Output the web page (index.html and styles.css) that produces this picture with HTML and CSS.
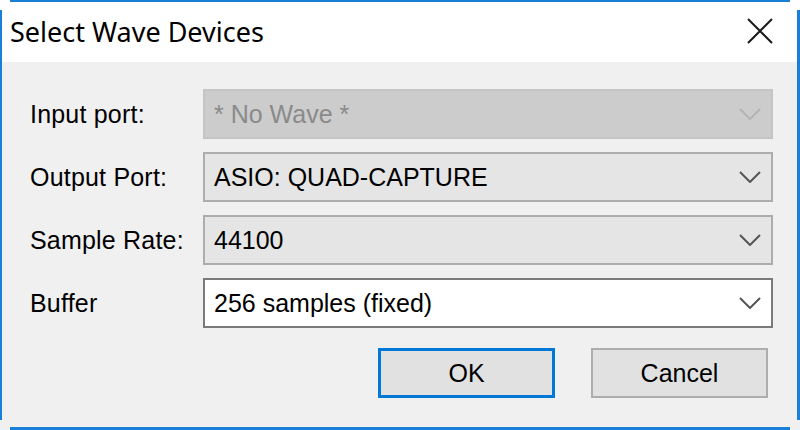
FILE: index.html
```html
<!DOCTYPE html>
<html>
<head>
<meta charset="utf-8">
<link rel="stylesheet" href="styles.css">
</head>
<body>
<div class="window">
  <div class="titlebar">
    <span class="title">Select Wave Devices</span>
    <span class="close">
      <svg width="26" height="26" viewBox="0 0 26 26"><path d="M1 1 L25 25 M25 1 L1 25" stroke="#1a1a1a" stroke-width="2" fill="none"/></svg>
    </span>
  </div>
  <div class="body">
    <div class="form">
      <div class="label">Input port:</div>
      <div class="combo disabled"><span class="value">* No Wave *</span><svg class="chev" width="22" height="12" viewBox="0 0 22 12"><path d="M1 1 L11 11 L21 1" stroke="#b4b4b4" stroke-width="2" fill="none"/></svg></div>
      <div class="label">Output Port:</div>
      <div class="combo"><span class="value">ASIO: QUAD-CAPTURE</span><svg class="chev" width="22" height="12" viewBox="0 0 22 12"><path d="M1 1 L11 11 L21 1" stroke="#555" stroke-width="2" fill="none"/></svg></div>
      <div class="label">Sample Rate:</div>
      <div class="combo"><span class="value">44100</span><svg class="chev" width="22" height="12" viewBox="0 0 22 12"><path d="M1 1 L11 11 L21 1" stroke="#555" stroke-width="2" fill="none"/></svg></div>
      <div class="label">Buffer</div>
      <div class="combo white"><span class="value">256 samples (fixed)</span><svg class="chev" width="22" height="12" viewBox="0 0 22 12"><path d="M1 1 L11 11 L21 1" stroke="#555" stroke-width="2" fill="none"/></svg></div>
    </div>
    <div class="buttons">
      <div class="btn default">OK</div>
      <div class="btn">Cancel</div>
    </div>
  </div>
</div>
</body>
</html>
```
FILE: styles.css
```css
html, body {
  margin: 0;
  padding: 0;
  width: 800px;
  height: 430px;
  overflow: hidden;
  background: #ffffff;
}
.window {
  position: relative;
  width: 800px;
  height: 430px;
  display: flex;
  flex-direction: column;
  background: #f0f0f0;
  font-family: "Liberation Sans", Arial, sans-serif;
  color: #000;
}
.window::before {
  content: "";
  position: absolute;
  left: 10px;
  right: 10px;
  top: 0;
  bottom: 0;
  border-top: 2px solid #1a7fd6;
  border-bottom: 3px solid #1a7fd6;
  pointer-events: none;
}
.window::after {
  content: "";
  position: absolute;
  left: 0;
  right: 0;
  top: 10px;
  bottom: 10px;
  border-left: 2px solid #1a7fd6;
  border-right: 3px solid #1a7fd6;
  pointer-events: none;
}
.titlebar {
  height: 62px;
  background: #ffffff;
  display: flex;
  align-items: center;
  justify-content: space-between;
  padding: 0 27px 0 10px;
  box-sizing: border-box;
}
.title {
  font-family: "Noto Sans", "Open Sans", sans-serif;
  font-size: 27px;
  color: #000;
}
.close {
  display: flex;
  width: 26px;
  height: 26px;
}
.body {
  flex: 1;
  padding: 27px 27px 0 30px;
  display: flex;
  flex-direction: column;
}
.form {
  display: grid;
  grid-template-columns: 173px 1fr;
  grid-auto-rows: 50px;
  row-gap: 13px;
}
.label {
  display: flex;
  align-items: center;
  font-size: 25px;
  letter-spacing: 0.2px;
}
.combo {
  display: flex;
  align-items: center;
  justify-content: space-between;
  box-sizing: border-box;
  border: 2px solid #adadad;
  background: #e5e5e5;
  padding: 0 10px 0 9px;
  font-size: 25px;
}
.combo.disabled {
  background: #cccccc;
  border-color: #c4c4c4;
  color: #8a8a8a;
}
.combo.white {
  background: #ffffff;
  border-color: #7a7a7a;
}
.chev {
  display: block;
}
.buttons {
  display: flex;
  justify-content: flex-end;
  gap: 36px;
  margin-top: 20px;
  padding-right: 5px;
}
.btn {
  width: 177px;
  height: 50px;
  box-sizing: border-box;
  border: 2px solid #adadad;
  background: #e1e1e1;
  display: flex;
  align-items: center;
  justify-content: center;
  font-size: 25px;
}
.btn.default {
  border: 3px solid #0078d7;
}
```
